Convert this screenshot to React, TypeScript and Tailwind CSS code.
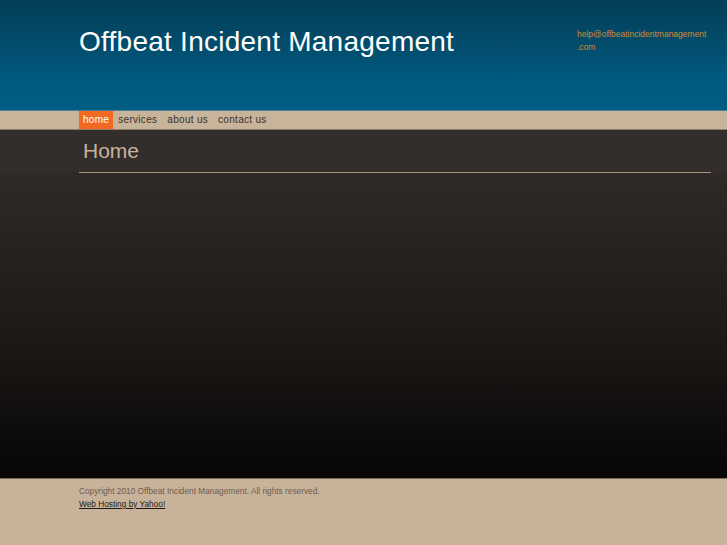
export default function App() {
  return (
    <div className="min-h-[545px] w-full flex flex-col font-['Liberation_Sans',Arial,sans-serif]">
      <header className="h-[110px] bg-[linear-gradient(to_bottom,#033f58_0%,#034c6b_40%,#005a80_70%,#005d84_100%)]">
        <div className="ml-[79px] w-[632px] flex items-start">
          <h1 className="mt-[28px] text-[28px] leading-none tracking-[0.25px] text-white">Offbeat Incident Management</h1>
          <div className="ml-auto mt-[28px] w-[134px] text-[8.5px] leading-[13px] text-[#d08a38]">
            help@offbeatincidentmanagement<wbr />.com
          </div>
        </div>
      </header>

      <nav className="h-[20px] bg-[#c8b49b] border-t border-[#4f7f94] border-b border-b-[#8c7b69]">
        <ul className="ml-[79px] flex h-full text-[10px] leading-[18px] tracking-[0.3px] text-[#3b322a]">
          <li className="px-[4px] bg-[#f26a22] text-white">home</li>
          <li className="px-[5px]">services</li>
          <li className="px-[5px]">about us</li>
          <li className="px-[5px]">contact us</li>
        </ul>
      </nav>

      <main className="h-[348px] bg-[linear-gradient(to_bottom,#332e2b_0px,#332e2b_42px,#302a27_43px,#1e1a18_200px,#0b0a09_320px,#080706_348px)]">
        <div className="ml-[79px] w-[632px]">
          <h2 className="pl-[4px] pt-[8px] h-[43px] text-[21px] leading-[25px] text-[#c6b49d] border-b border-[#a8957f]">Home</h2>
        </div>
      </main>

      <footer className="h-[68px] bg-[#c8b39a] border-t border-[#7d6d5c]">
        <div className="ml-[79px] pt-[6px] text-[8.3px] leading-[13px]">
          <p className="text-[#6b5d4f]">Copyright 2010 Offbeat Incident Management. All rights reserved.</p>
          <a href="#" className="text-[#1e1a16] underline">Web Hosting by Yahoo!</a>
        </div>
      </footer>
    </div>
  )
}
